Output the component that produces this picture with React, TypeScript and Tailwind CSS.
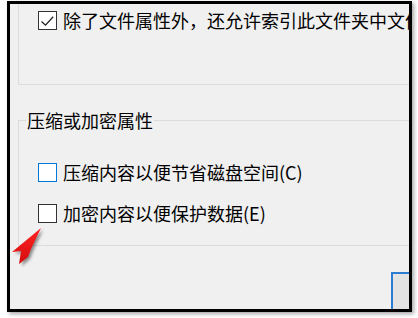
import React from "react";

const font = { fontFamily: '"Noto Sans CJK SC", "Noto Sans", sans-serif' };

function Box({ checked, color }: { checked?: boolean; color: string }) {
  return (
    <div
      className={`w-[19px] h-[19px] shrink-0 bg-white border ${color === "blue" ? "border-[#0078d7]" : "border-[#333333]"}`}
    >
      {checked && (
        <svg width="17" height="17" viewBox="0 0 17 17">
          <polyline points="2.5,9.5 6.5,13.2 14.2,4.8" fill="none" stroke="#222" strokeWidth="1.3" />
        </svg>
      )}
    </div>
  );
}

export default function App() {
  return (
    <div className="relative w-[418px] h-[318px] bg-white overflow-hidden" style={font}>
      <div className="ml-[7px] mt-[1px] w-[405px] h-[311px] border-[3px] border-black bg-[#f0f0f0] overflow-hidden shadow-[2px_2px_4px_rgba(0,0,0,0.35)] text-[18px] text-black">
        {/* group 1 */}
        <div className="ml-[8px] h-[81px] border-l border-b border-[#dcdcdc] pl-[19px] pt-[7px]">
          <div className="flex items-center gap-[6px] h-[19px] whitespace-nowrap leading-[19px]">
            <Box checked color="dark" />
            <span>除了文件属性外，还允许索引此文件夹中文件的内容</span>
          </div>
        </div>
        {/* group 2 */}
        <div className="relative mt-[35px] ml-[8px] h-[126px] border-l border-t border-b border-[#dcdcdc] pl-[19px] pt-[42px]">
          <span className="absolute left-[7px] top-[-11px] px-[1px] bg-[#f0f0f0] leading-[20px] whitespace-nowrap">
            压缩或加密属性
          </span>
          <div className="flex items-center gap-[6px] h-[19px] whitespace-nowrap leading-[19px]">
            <Box color="blue" />
            <span>压缩内容以便节省磁盘空间(C)</span>
          </div>
          <div className="mt-[22px] flex items-center gap-[6px] h-[19px] whitespace-nowrap leading-[19px]">
            <Box color="dark" />
            <span>加密内容以便保护数据(E)</span>
          </div>
        </div>
        <div className="mt-[26px] pl-[381px]">
          <div className="w-[60px] h-[50px] border-l-2 border-t-2 border-[#2a7dd1] bg-[#e3e3e3]" />
        </div>
      </div>
      <svg className="absolute left-0 top-0" width="60" height="280" viewBox="0 0 60 280" style={{ pointerEvents: "none" }}>
        <defs>
          <filter id="sh" x="-50%" y="-50%" width="200%" height="200%">
            <feGaussianBlur stdDeviation="1.5" />
          </filter>
          <linearGradient id="rg" x1="0" y1="0" x2="0" y2="1">
            <stop offset="0" stopColor="#ff2424" />
            <stop offset="1" stopColor="#d40c0c" />
          </linearGradient>
        </defs>
        <polygon
          points="43,230 15,254 23,253 22,266 30,259 33,251"
          fill="#444"
          opacity="0.6"
          filter="url(#sh)"
        />
        <polygon points="41,228 12,252 21,251 19,264 28,257 31,249" fill="url(#rg)" />
      </svg>
    </div>
  );
}
